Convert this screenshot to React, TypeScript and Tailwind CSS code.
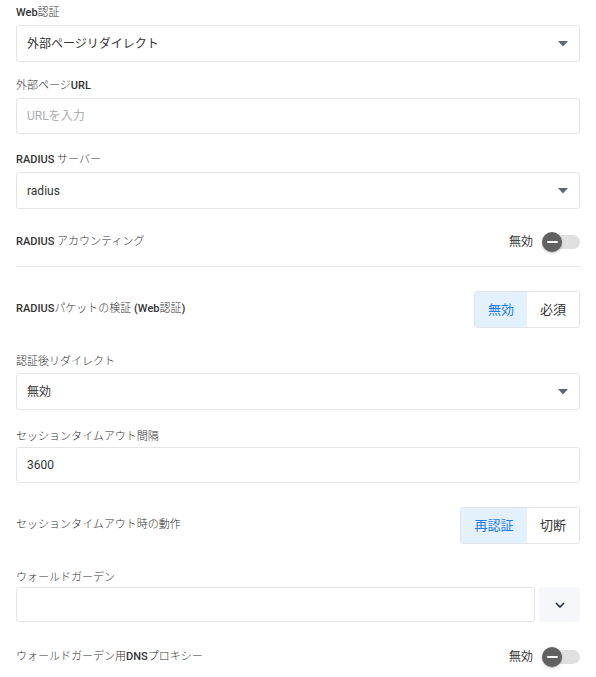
import React from "react";

const font = { fontFamily: 'Roboto, "Noto Sans CJK JP", sans-serif' };

function L({ children }: { children: React.ReactNode }) {
  return <span className="font-medium">{children}</span>;
}

function Label({ children }: { children: React.ReactNode }) {
  return <div className="h-4 text-[11px] leading-4 font-light text-[#333]">{children}</div>;
}

function SelectBox({ value }: { value: string }) {
  return (
    <div className="flex h-[37px] items-center justify-between rounded-[3px] border border-[#e3e5e8] bg-white pl-[10px] pr-[11px]">
      <span className="text-[12px] text-[#333]">{value}</span>
      <svg width="10" height="6" viewBox="0 0 10 6">
        <path d="M0 0 L10 0 L5 5.5 Z" fill="#5c6879" />
      </svg>
    </div>
  );
}

function Toggle() {
  return (
    <div className="flex items-center gap-[9px]">
      <span className="text-[12px] text-[#333]">無効</span>
      <div className="relative h-5 w-[38px]">
        <div className="absolute right-0 top-[3px] h-[14px] w-[34px] rounded-full bg-[#e0e0e0]" />
        <div className="absolute left-0 top-0 flex h-5 w-5 items-center justify-center rounded-full bg-[#616161] shadow-[0_1px_2px_rgba(0,0,0,0.3)]">
          <div className="h-[2px] w-[11px] rounded bg-white" />
        </div>
      </div>
    </div>
  );
}

function Segmented({ a, b, aw }: { a: string; b: string; aw: string }) {
  return (
    <div className="flex h-[37px] overflow-hidden rounded-[3px] border border-[#e3e5e8] text-[13px]">
      <div className={`${aw} flex items-center justify-center bg-[#e3f1fd] text-[#1b7bf0]`}>{a}</div>
      <div className="flex w-[52px] items-center justify-center bg-white text-[#333]">{b}</div>
    </div>
  );
}

export default function App() {
  return (
    <div className="min-h-[677px] w-[596px] bg-white px-4 pt-[5px]" style={font}>
      <div className="flex w-[564px] flex-col">
        <Label>
          <L>Web</L>認証
        </Label>
        <div className="mt-1">
          <SelectBox value="外部ページリダイレクト" />
        </div>

        <div className="mt-4">
          <Label>
            外部ページ<L>URL</L>
          </Label>
        </div>
        <div className="mt-1 flex h-[36px] items-center rounded-[3px] border border-[#e3e5e8] pl-[10px]">
          <span className="text-[12px] text-[#a9adb3]">URLを入力</span>
        </div>

        <div className="mt-[18px]">
          <Label>
            <L>RADIUS</L> サーバー
          </Label>
        </div>
        <div className="mt-1">
          <SelectBox value="radius" />
        </div>

        <div className="mt-[17px] flex h-8 items-center justify-between">
          <span className="text-[11px] font-light text-[#333]">
            <L>RADIUS</L> アカウンティング
          </span>
          <Toggle />
        </div>
        <div className="mt-2 h-px bg-[#e6e8eb]" />

        <div className="mt-[24px] flex h-[37px] items-center justify-between">
          <span className="text-[11px] font-light text-[#333]">
            <L>RADIUS</L>パケットの検証 <L>(Web</L>認証<L>)</L>
          </span>
          <Segmented a="無効" b="必須" aw="w-[52px]" />
        </div>

        <div className="mt-[26px]">
          <Label>認証後リダイレクト</Label>
        </div>
        <div className="mt-[3px]">
          <SelectBox value="無効" />
        </div>

        <div className="mt-[19px]">
          <Label>セッションタイムアウト間隔</Label>
        </div>
        <div className="mt-[2px] flex h-[36px] items-center rounded-[3px] border border-[#e3e5e8] pl-[10px]">
          <span className="text-[12px] text-[#333]">3600</span>
        </div>

        <div className="mt-[24px] flex h-[37px] items-center justify-between">
          <span className="text-[11px] font-light text-[#333]">セッションタイムアウト時の動作</span>
          <Segmented a="再認証" b="切断" aw="w-[66px]" />
        </div>

        <div className="mt-[26px]">
          <Label>ウォールドガーデン</Label>
        </div>
        <div className="mt-[1px] flex h-[35px] gap-1">
          <div className="flex-1 rounded-[3px] border border-[#e3e5e8]" />
          <div className="flex w-[41px] items-center justify-center rounded-[3px] bg-[#f5f7fb]">
            <svg width="10" height="6" viewBox="0 0 10 6">
              <path d="M1 1 L5 5 L9 1" fill="none" stroke="#1f2a44" strokeWidth="1.6" />
            </svg>
          </div>
        </div>

        <div className="mt-[19px] flex h-8 items-center justify-between">
          <span className="text-[11px] font-light text-[#333]">
            ウォールドガーデン用<L>DNS</L>プロキシー
          </span>
          <Toggle />
        </div>
      </div>
    </div>
  );
}
